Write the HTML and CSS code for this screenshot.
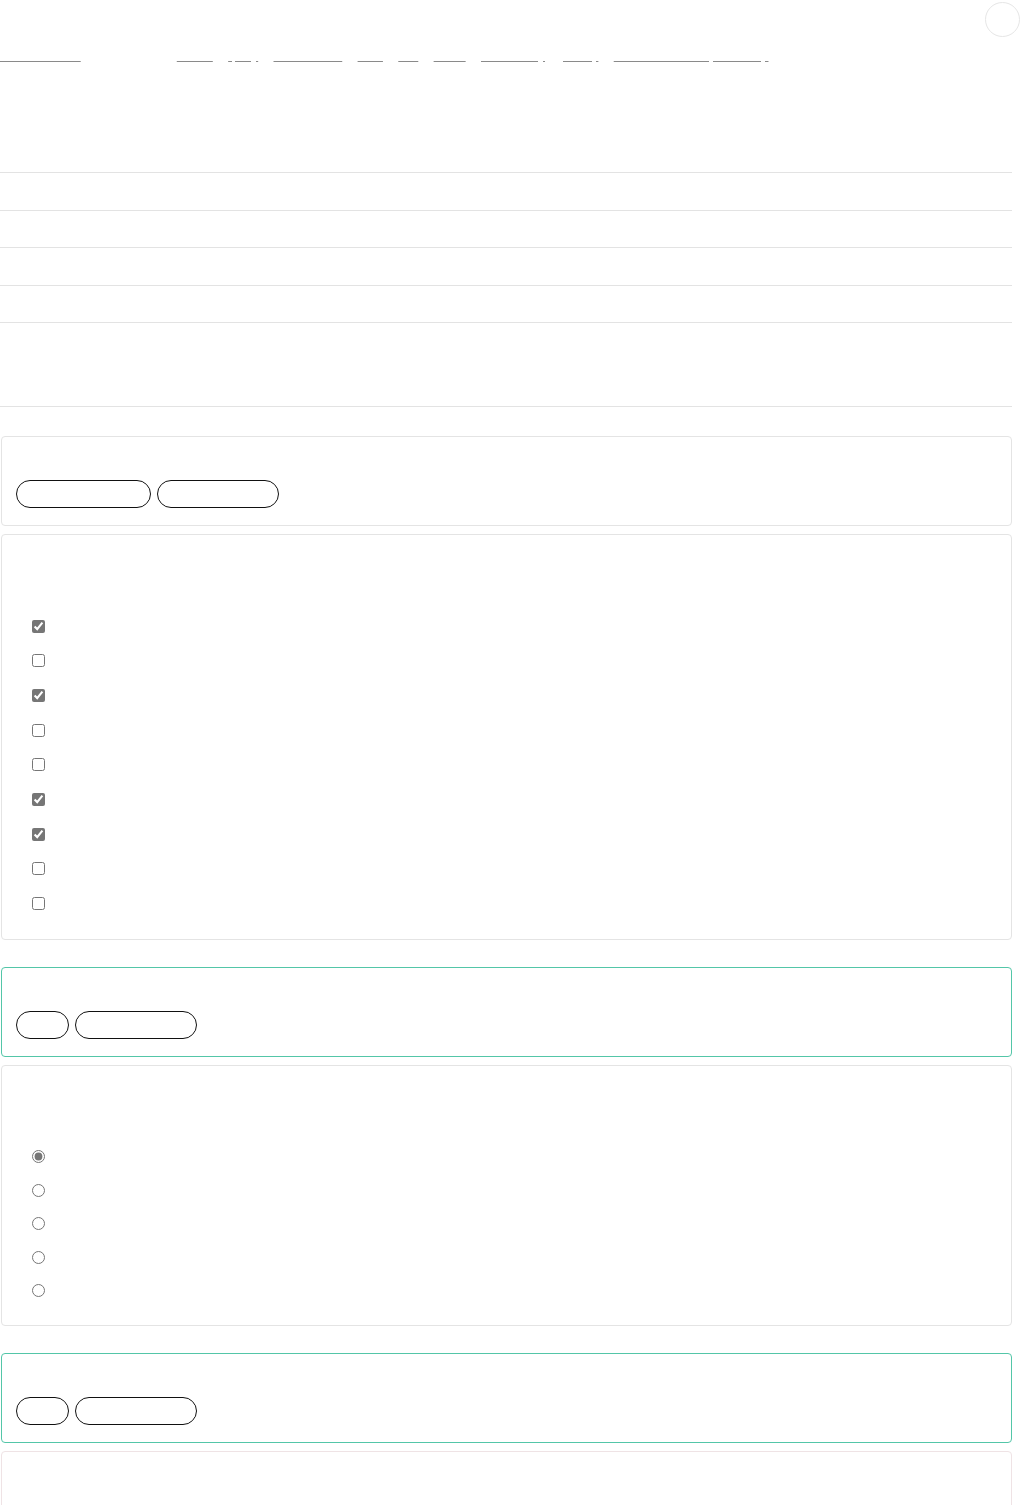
FILE: index.html
```html
<!DOCTYPE html>
<html lang="en">

<head>
  <meta charset="UTF-8" />
  <meta name="viewport" content="width=device-width, initial-scale=1.0" />
  <title>Preferences</title>
  <link rel="stylesheet" href="styles.css">
</head>

<body>
  <div class="page">
    <header class="top">
      <div class="top-row">
        <button class="round-btn" aria-label="Account"></button>
      </div>
      <p class="links">
        <a href="#">Documentation</a> about all items <a href="#">menus</a>
        <a href="#">query</a> <a href="#">maintenance</a> <a href="#">tools</a>
        <a href="#">wiki</a> <a href="#">status</a> <a href="#">accessibility</a>
        <a href="#">privacy</a> <a href="#">newsletter subscription setup</a>
      </p>
      <h1 class="title">Account settings</h1>
    </header>

    <table class="info">
      <tr><td>Name</td><td>Default profile</td></tr>
      <tr><td>Email</td><td>user@example.com</td></tr>
      <tr><td>Language</td><td>English</td></tr>
      <tr><td>Region</td><td>Europe</td></tr>
      <tr class="tall"><td>Notes</td><td>No notes</td></tr>
    </table>

    <section class="card">
      <h3>Notifications</h3>
      <div class="actions">
        <button class="pill w-135">Select all</button>
        <button class="pill w-122">Clear all</button>
      </div>
    </section>

    <section class="card list-card">
      <h3>Email me about</h3>
      <label class="opt"><input type="checkbox" checked> New comments</label>
      <label class="opt"><input type="checkbox"> Mentions</label>
      <label class="opt"><input type="checkbox" checked> Replies</label>
      <label class="opt"><input type="checkbox"> Followers</label>
      <label class="opt"><input type="checkbox"> Likes</label>
      <label class="opt"><input type="checkbox" checked> Weekly digest</label>
      <label class="opt"><input type="checkbox" checked> Security alerts</label>
      <label class="opt"><input type="checkbox"> Product news</label>
      <label class="opt"><input type="checkbox"> Surveys</label>
    </section>

    <section class="card card-ok">
      <h3>Frequency</h3>
      <div class="actions">
        <button class="pill w-53">Save</button>
        <button class="pill w-122">Reset</button>
      </div>
    </section>

    <section class="card list-card radio-card">
      <h3>Send digest</h3>
      <label class="opt"><input type="radio" name="freq" checked> Daily</label>
      <label class="opt"><input type="radio" name="freq"> Weekly</label>
      <label class="opt"><input type="radio" name="freq"> Monthly</label>
      <label class="opt"><input type="radio" name="freq"> Quarterly</label>
      <label class="opt"><input type="radio" name="freq"> Never</label>
    </section>

    <section class="card card-ok">
      <h3>Privacy</h3>
      <div class="actions">
        <button class="pill w-53">Save</button>
        <button class="pill w-122">Reset</button>
      </div>
    </section>

    <section class="card card-soft">
      <h3>Danger zone</h3>
    </section>
  </div>
</body>

</html>
```

FILE: styles.css
```css
body {
  margin: 0;
  font-family: "Liberation Sans", Arial, sans-serif;
  font-size: 13px;
  color: #fff;
  background: #fff;
}

.page {
  width: 1012px;
}

.top {
  height: 172px;
}

.top-row {
  display: flex;
  justify-content: flex-end;
  height: 40px;
  margin-right: -8px;
}

.round-btn {
  width: 35px;
  height: 35px;
  margin-top: 2px;
  border: 1px solid #e6e6e6;
  border-radius: 50%;
  background: #fff;
}

.links {
  margin: 7px 0 0;
  font-size: 12px;
  line-height: 18px;
}

.links a {
  color: #fff;
  text-decoration: underline;
  text-decoration-color: #8a8a8a;
}

.links a + a {
  margin-left: 12px;
}

.title {
  margin: 20px 0 0;
  font-size: 24px;
  font-weight: normal;
}

.info {
  width: 100%;
  border-collapse: collapse;
  margin-bottom: 29px;
}

.info td {
  height: 36.5px;
  padding: 0;
  border-top: 1px solid #e3e3e3;
  border-bottom: 1px solid #e3e3e3;
}

.info tr.tall td {
  height: 83px;
}

.card {
  margin: 0 0 8px 1px;
  width: 1011px;
  box-sizing: border-box;
  border: 1px solid #e4e4e4;
  border-radius: 4px;
  padding: 15px 14px 17px;
}

.card h3 {
  margin: 0 0 10px;
  height: 18px;
  font-size: 14px;
}

.card-ok {
  border-color: #53c6a8;
  margin-top: 27px;
}

.card-soft {
  border-color: #efe3e5;
  height: 60px;
}

.actions {
  display: flex;
  gap: 6px;
}

.pill {
  height: 28px;
  border: 1px solid #111;
  border-radius: 14px;
  background: #fff;
  color: #fff;
  font-family: inherit;
}

.w-135 { width: 135px; }
.w-122 { width: 122px; }
.w-53 { width: 53px; }

.list-card {
  padding-bottom: 18.375px;
}

.list-card h3 {
  margin-bottom: 41px;
}

.opt {
  display: flex;
  align-items: center;
  height: 34.625px;
  padding-left: 16px;
}

.radio-card {
  padding-bottom: 17.5px;
}

.radio-card .opt {
  height: 33.5px;
}

.opt input {
  margin: 0 8px 0 0;
  width: 13px;
  height: 13px;
  accent-color: #767676;
}
```
